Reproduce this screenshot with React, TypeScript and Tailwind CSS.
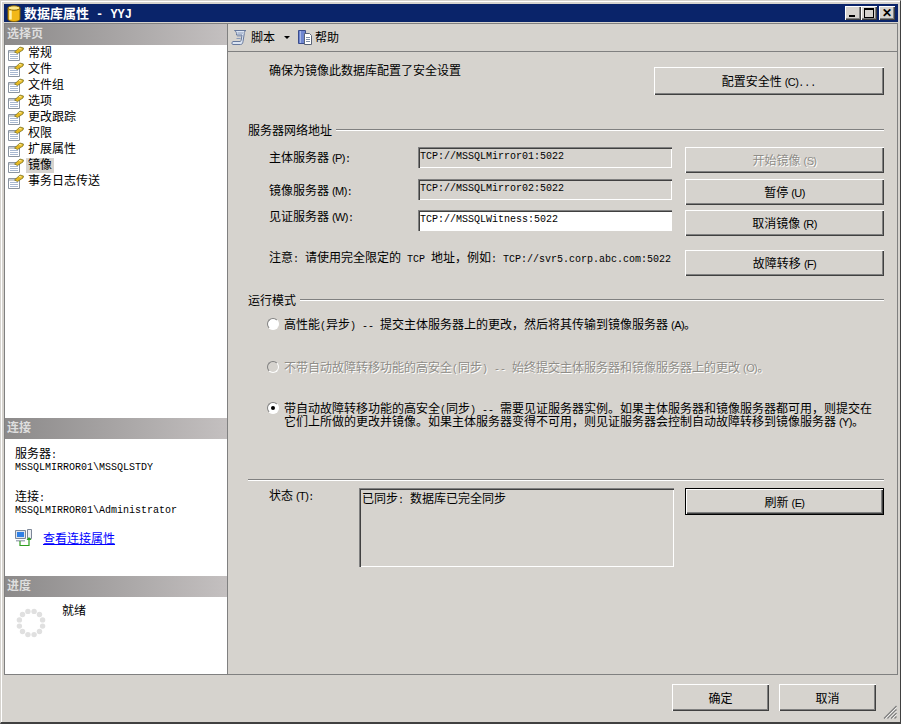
const NAV = ["常规", "文件", "文件组", "选项", "更改跟踪", "权限", "扩展属性", "镜像", "事务日志传送"];

// SimSun-like mix: CJK at 12px, latin runs in a 6px-wide mono, accelerator keys squeezed
function T({ children }: { children: string }) {
  const parts = children.match(/ ?\([A-Z]\)|[\x20-\x7e]+?(?= ?\([A-Z]\)|[^\x20-\x7e]|$)|[^\x20-\x7e]+/g) ?? [];
  return (
    <>
      {parts.map((p, i) => {
        if (/^ ?\([A-Z]\)$/.test(p)) {
          return (
            <span key={i} className="ml-[3px] font-['Liberation_Sans',sans-serif] text-[11px] leading-none tracking-[-0.6px]">
              {p.trim()}
            </span>
          );
        }
        if (/^[\x20-\x7e]/.test(p)) {
          return (
            <span key={i} className="whitespace-pre font-['Liberation_Mono',monospace] text-[10px] leading-none">
              {p}
            </span>
          );
        }
        return <span key={i}>{p}</span>;
      })}
    </>
  );
}

function PageIcon() {
  return (
    <svg width="16" height="15" viewBox="0 0 16 15" className="shrink-0">
      <path d="M0.500 4.500h11v10h-11z" fill="#fff" stroke="#8a94a0" />
      <path d="M1 5h10v2H1z" fill="#c8cdd4" />
      <path d="M2 8.500h8M2 10.500h8M2 12.500h8" stroke="#a8b8d0" />
      <path d="M6.500 6l5.500-5 3.500 1-.5 2-5.500 3.500z" fill="#e6b820" stroke="#6f6a20" strokeWidth="0.700" />
      <path d="M11 2.500l2.500.5" stroke="#fff4b0" />
    </svg>
  );
}

function ScriptIcon() {
  return (
    <svg width="17" height="17" viewBox="0 0 17 17" className="shrink-0">
      <path d="M3.500 1.500h11.500c-1.500.7-2 1.500-1.700 3l-1.300 8c-.3 2-1 3-2.500 3H2c-1.300 0-1.700-2.300 0-3h7c.8 0 1-.7 1.200-1.500L11 6H5.500c.2-2-.2-3.500-2-4.500z" fill="#dbe4f2" stroke="#66789c" />
      <path d="M6.500 4h5.500M6 7h4.500M5.500 9.500h4" stroke="#8a9ab8" />
    </svg>
  );
}

function HelpIcon() {
  return (
    <svg width="16" height="17" viewBox="0 0 16 17" className="shrink-0">
      <path d="M1.500 1.500h7v13h-7z" fill="#6f86d0" stroke="#3a4c8c" />
      <path d="M3.500 2v12" stroke="#a8b8e8" />
      <path d="M7.500 4.500h5l2 2v9h-7z" fill="#fff" stroke="#5a6478" />
      <path d="M9 8.500h4M9 10.500h4M9 12.500h4" stroke="#7f8fa8" />
    </svg>
  );
}

function DbIcon() {
  return (
    <svg width="14" height="17" viewBox="0 0 14 17" className="shrink-0">
      <path d="M1 3v11c0 1.500 2.500 2.500 6 2.500s6-1 6-2.500V3z" fill="#f2b818" stroke="#8a6500" />
      <ellipse cx="7" cy="3" rx="6" ry="2.200" fill="#ffe98a" stroke="#8a6500" />
      <path d="M3.500 5.500v9" stroke="#fff2b0" strokeWidth="2.500" />
    </svg>
  );
}

function ConnIcon() {
  return (
    <svg width="17" height="17" viewBox="0 0 17 17" className="shrink-0">
      <path d="M0.500 1.500h10v8h-10z" fill="#dfe4ec" stroke="#7c8798" />
      <path d="M2 3h7v5H2z" fill="#2f7fe6" />
      <path d="M1 11h9v1.500H1z" fill="#a8b0bc" />
      <path d="M12.500 0.500h4v9h-4z" fill="#eceef2" stroke="#7c8798" />
      <path d="M5 12v4.500h9V10" fill="none" stroke="#2f9e20" strokeWidth="1.200" />
      <path d="M11.500 11l2.500-3 2.500 3z" fill="#2f9e20" />
    </svg>
  );
}

function Spinner() {
  const dots = Array.from({ length: 12 }, (_, i) => (i * Math.PI) / 6 + Math.PI / 12);
  return (
    <svg width="30" height="30" viewBox="0 0 30 30" className="shrink-0">
      {dots.map((a, i) => (
        <circle key={i} cx={15 + 12 * Math.cos(a)} cy={15 + 12 * Math.sin(a)} r="2.700" fill="#e0e0e0" />
      ))}
    </svg>
  );
}

function SectionBar({ title }: { title: string }) {
  return (
    <div className="flex h-[21px] shrink-0 items-center bg-gradient-to-r from-[#8c8a8a] to-[#c4c0c0] pb-[3px] pl-[2px] font-bold text-[#dedede]">
      {title}
    </div>
  );
}

function Button({ label, className, disabled, primary }: { label: string; className: string; disabled?: boolean; primary?: boolean }) {
  return (
    <div
      className={`flex shrink-0 items-center justify-center bg-[#d6d3ce] shadow-[inset_1px_1px_0_#fff,inset_-1px_-1px_0_#404040,inset_-2px_-2px_0_#808080] ${
        primary ? "border border-black" : ""
      } ${disabled ? "text-[#8f8d88] [text-shadow:1px_1px_0_#fff]" : ""} ${className}`}
    >
      <span className="whitespace-pre">
        <T>{label}</T>
      </span>
    </div>
  );
}

function Field({ value, white }: { value: string; white?: boolean }) {
  return (
    <div
      className={`flex h-[21px] w-[254px] shrink-0 items-center pb-[2px] pl-[2px] shadow-[inset_1px_1px_0_#808080,inset_2px_2px_0_#404040,inset_-1px_-1px_0_#fff] ${
        white ? "bg-white" : "bg-[#d6d3ce]"
      }`}
    >
      <T>{value}</T>
    </div>
  );
}

function GroupTitle({ title }: { title: string }) {
  return (
    <div className="flex h-[14px] items-center gap-[4px] pr-[13px]">
      <span>{title}</span>
      <div className="h-[2px] flex-1 border-t border-b border-t-[#808080] border-b-white" />
    </div>
  );
}

function ServerRow({ label, value, white, btn, disabled, labelTop, className }: { label: string; value: string; white?: boolean; btn: string; disabled?: boolean; labelTop: string; className: string }) {
  return (
    <div className={`flex h-[26px] pl-[21px] ${className}`}>
      <div className={`w-[149px] shrink-0 whitespace-pre ${labelTop}`}>
        <T>{label}</T>
      </div>
      <Field value={value} white={white} />
      <Button label={btn} disabled={disabled} className="ml-[13px] h-[26px] w-[199px]" />
    </div>
  );
}

function Radio({ checked, disabled }: { checked?: boolean; disabled?: boolean }) {
  return (
    <div
      className={`mt-[1px] flex h-[12px] w-[12px] shrink-0 items-center justify-center rounded-full border border-t-[#808080] border-r-white border-b-white border-l-[#808080] ${
        disabled ? "bg-[#d6d3ce]" : "bg-white"
      }`}
    >
      {checked && <div className="h-[4px] w-[4px] rounded-full bg-black" />}
    </div>
  );
}

export default function App() {
  return (
    <div className="flex h-[724px] w-[901px] flex-col border-t border-r border-b-[2px] border-l border-t-[#d6d3ce] border-r-[#404040] border-b-[#404040] border-l-[#d6d3ce] bg-[#d6d3ce] pt-[3px] pr-[2px] pb-[3px] pl-[3px] font-['Noto_Sans_CJK_SC','Liberation_Sans',sans-serif] text-[12px] leading-[14px] text-black shadow-[inset_1px_1px_0_#fff]">
      {/* title bar */}
      <div className="flex h-[18px] shrink-0 items-center bg-[#0a246a] pr-[3px] pl-[3px] text-[13px] font-bold text-white">
        <DbIcon />
        <span className="ml-[3px] whitespace-pre">
          数据库属性
          <span className="ml-[7px] font-['Liberation_Mono',monospace] text-[12px] leading-none">- YYJ</span>
        </span>
        <div className="ml-auto flex items-center">
          {[
            <div key="a" className="mt-[6px] -ml-[2px] h-[2px] w-[6px] bg-black" />,
            <div key="b" className="mb-[1px] -ml-[1px] h-[10px] w-[10px] border border-t-2 border-black" />,
            <span key="c" className="mb-[1px] -ml-[1px] font-['Liberation_Sans',sans-serif] text-[12px] leading-none font-bold">✕</span>,
          ].map((icon, i) => (
            <div
              key={i}
              className={`flex h-[14px] w-[16px] items-center justify-center bg-[#d6d3ce] text-black shadow-[inset_1px_1px_0_#fff,inset_-1px_-1px_0_#404040,inset_-2px_-2px_0_#808080] ${i === 2 ? "ml-[2px]" : ""}`}
            >
              {icon}
            </div>
          ))}
        </div>
      </div>

      <div className="mt-[1px] flex h-[652px] min-h-0 shrink-0 border-t border-b border-t-[#808080] border-b-[#808080]">
        {/* left column */}
        <div className="flex w-[224px] shrink-0 flex-col border-r border-l border-r-[#808080] border-l-[#808080] bg-white">
          <SectionBar title="选择页" />
          <div className="flex h-[373px] shrink-0 flex-col pl-[3px]">
            {NAV.map((n) => (
              <div key={n} className="flex h-[16px] shrink-0 items-center">
                <PageIcon />
                <span className={`ml-[2px] flex h-[15px] items-center px-[2px] pb-[2px] ${n === "镜像" ? "bg-[#d6d3ce]" : ""}`}>{n}</span>
              </div>
            ))}
          </div>
          <SectionBar title="连接" />
          <div className="flex h-[137px] shrink-0 flex-col pt-[8px] pl-[10px]">
            <div className="h-[12px] leading-[12px]">
              <T>服务器:</T>
            </div>
            <div className="h-[12px] leading-[12px]">
              <T>MSSQLMIRROR01\MSSQLSTDY</T>
            </div>
            <div className="mt-[19px] h-[12px] leading-[12px]">
              <T>连接:</T>
            </div>
            <div className="h-[12px] leading-[12px]">
              <T>MSSQLMIRROR01\Administrator</T>
            </div>
            <div className="mt-[15px] flex items-center">
              <ConnIcon />
              <span className="ml-[11px] text-[#0000ff] underline">查看连接属性</span>
            </div>
          </div>
          <SectionBar title="进度" />
          <div className="flex flex-1 pt-[6px] pl-[11px]">
            <div className="mt-[5px]">
              <Spinner />
            </div>
            <span className="ml-[16px]">就绪</span>
          </div>
        </div>

        {/* main column */}
        <div className="flex min-w-0 flex-1 flex-col border-r border-r-[#808080]">
          <div className="flex h-[28px] shrink-0 items-center gap-[2px] border-b border-[#808080] pb-[1px] pl-[3px]">
            <ScriptIcon />
            <span className="ml-[1px]">脚本</span>
            <span className="ml-[7px] h-0 w-0 border-x-[3px] border-t-[3px] border-x-transparent border-t-black" />
            <span className="ml-[5px]">
              <HelpIcon />
            </span>
            <span>帮助</span>
          </div>

          <div className="flex flex-1 flex-col pt-[15px] pl-[20px]">
            <div className="flex h-[28px] pl-[21px]">
              <span className="-mt-[4px]">确保为镜像此数据库配置了安全设置</span>
              <Button label="配置安全性 (C)..." className="mr-[13px] ml-auto h-[28px] w-[230px]" />
            </div>

            <div className="mt-[28px]">
              <GroupTitle title="服务器网络地址" />
            </div>
            <ServerRow label="主体服务器 (P):" value="TCP://MSSQLMirror01:5022" btn="开始镜像 (S)" disabled labelTop="pt-[3px]" className="mt-[10px]" />
            <ServerRow label="镜像服务器 (M):" value="TCP://MSSQLMirror02:5022" btn="暂停 (U)" labelTop="pt-[4px]" className="mt-[6px]" />
            <ServerRow label="见证服务器 (W):" value="TCP://MSSQLWitness:5022" white btn="取消镜像 (R)" labelTop="-mt-[1px]" className="mt-[5px]" />
            <div className="mt-[14px] flex h-[26px] pl-[21px]">
              <span className="whitespace-pre">
                <T>注意: 请使用完全限定的 TCP 地址，例如: TCP://svr5.corp.abc.com:5022</T>
              </span>
              <Button label="故障转移 (F)" className="mr-[13px] ml-auto h-[26px] w-[199px]" />
            </div>

            <div className="mt-[17px]">
              <GroupTitle title="运行模式" />
            </div>
            <div className="mt-[10px] flex gap-[5px] pl-[19px]">
              <Radio />
              <span>
                <T>高性能(异步) -- 提交主体服务器上的更改，然后将其传输到镜像服务器 (A)。</T>
              </span>
            </div>
            <div className="mt-[28px] flex gap-[5px] pl-[19px] text-[#8f8d88] [text-shadow:1px_1px_0_#fff]">
              <Radio disabled />
              <span>
                <T>不带自动故障转移功能的高安全(同步) -- 始终提交主体服务器和镜像服务器上的更改 (O)。</T>
              </span>
            </div>
            <div className="mt-[26px] flex gap-[5px] pl-[19px]">
              <Radio checked />
              <div className="w-[596px]">
                <div className="h-[13px] whitespace-pre">
                  <T>带自动故障转移功能的高安全(同步) -- 需要见证服务器实例。如果主体服务器和镜像服务器都可用，则提交在</T>
                </div>
                <div className="h-[14px] whitespace-pre">
                  <T>它们上所做的更改并镜像。如果主体服务器变得不可用，则见证服务器会控制自动故障转移到镜像服务器 (Y)。</T>
                </div>
              </div>
            </div>

            <div className="mt-[51px] mr-[13px] h-[2px] border-t border-b border-t-[#808080] border-b-white" />

            <div className="mt-[7px] flex pl-[21px]">
              <div className="w-[90px] shrink-0 whitespace-pre">
                <T>状态 (T):</T>
              </div>
              <div className="h-[79px] w-[315px] shrink-0 pt-[3px] pl-[3px] shadow-[inset_1px_1px_0_#808080,inset_2px_2px_0_#404040,inset_-1px_-1px_0_#fff]">
                <T>已同步: 数据库已完全同步</T>
              </div>
              <Button label="刷新 (E)" primary className="ml-[11px] h-[27px] w-[199px]" />
            </div>
          </div>
        </div>
      </div>

      {/* footer */}
      <div className="relative flex flex-1 justify-end gap-[10px] pt-[9px] pr-[22px]">
        <Button label="确定" className="h-[27px] w-[97px]" />
        <Button label="取消" className="h-[27px] w-[97px]" />
        <svg width="14" height="14" viewBox="0 0 14 14" className="absolute right-[1px] bottom-0">
          <path d="M13.500 1L1 13.500M13.500 4.500L4.500 13.500M13.500 8L8 13.500M13.500 11.500L11.500 13.500" stroke="#808080" strokeWidth="1.300" />
          <path d="M13.500 2.500L2.500 13.500M13.500 6L6 13.500M13.500 9.500L9.500 13.500" stroke="#fff" strokeWidth="0.700" />
        </svg>
      </div>
    </div>
  );
}
